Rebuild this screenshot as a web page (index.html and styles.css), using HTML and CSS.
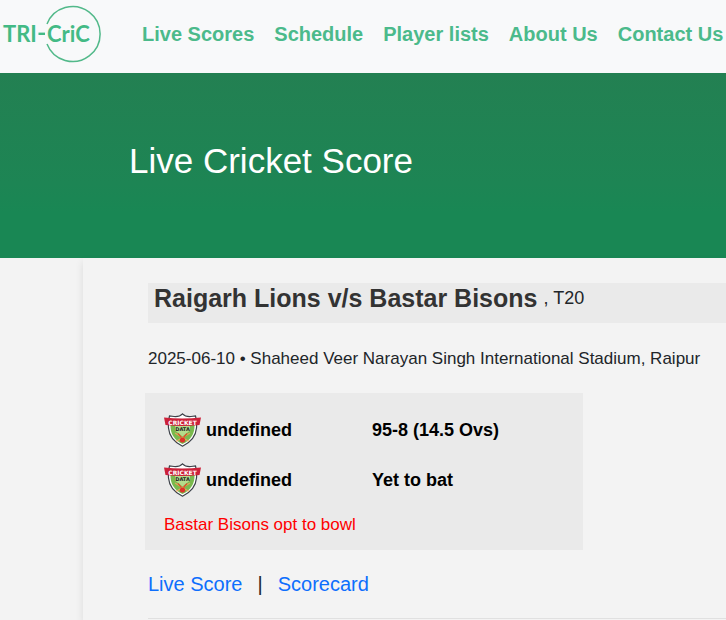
FILE: index.html
```html
<!DOCTYPE html>
<html lang="en">
<head>
<meta charset="utf-8">
<meta name="viewport" content="width=device-width, initial-scale=1">
<title>Live Cricket Score</title>
<link rel="stylesheet" href="styles.css">
</head>
<body>
<header class="navbar">
  <a class="brand" href="#" aria-label="TRI-CriC home">
    <svg class="brand-logo" viewBox="0 0 102 58">
      <path d="M47 19A27.500 27.500 0 1 1 47 39" fill="none" stroke="#52b98a" stroke-width="1.500"/>
      <text x="3" y="37" class="brand-text">TRI</text>
      <path d="M38.500 28.800h6.500" stroke="#43ba85" stroke-width="2.400"/>
      <text x="47" y="37" class="brand-text">CriC</text>
    </svg>
  </a>
  <nav class="nav-links">
    <a href="#">Live Scores</a>
    <a href="#">Schedule</a>
    <a href="#">Player lists</a>
    <a href="#">About Us</a>
    <a href="#">Contact Us</a>
  </nav>
</header>

<section class="hero">
  <h1>Live Cricket Score</h1>
</section>

<main class="match">
  <div class="match-title"><h2>Raigarh Lions v/s Bastar Bisons</h2><span>, T20</span></div>
  <p class="venue">2025-06-10 • Shaheed Veer Narayan Singh International Stadium, Raipur</p>
  <section class="scores">
    <div class="team">
      <div class="team-name">
        <svg class="crest" viewBox="0 0 37 34">
          <g id="crest">
            <path d="M18.500 .8Q15.500 4 10 3.500L5.500 3Q4 8 4.500 15Q5.500 27 18.500 33.200Q31.500 27 32.500 15Q33 8 31.500 3L27 3.500Q21.500 4 18.500 .8Z" fill="#fff" stroke="#3b4048" stroke-width="1.200"/>
            <path d="M6.500 12H30.500Q31 25 18.500 31Q6 25 6.500 12Z" fill="#79b94e"/>
            <path d="M11 12.500h15v5l-7.500 6-7.500-6Z" fill="#b4dc8c"/>
            <path d="M11 20l14 8.500M26 20l-14 8.500" stroke="#e3a75a" stroke-width="1.300"/>
            <path d="M14 20.500l3.500 4M23 20.500l-3.500 4" stroke="#d9532f" stroke-width="1.200"/>
            <circle cx="18.500" cy="27" r="2.600" fill="#dc3329"/>
            <path d="M0 4.500Q18.500 6.500 37 4.500L35.500 12Q18.500 14 1.500 12Z" fill="#cc2139"/>
            <text x="18.500" y="11.500" text-anchor="middle" class="crest-name">CRICKET</text>
            <text x="18.500" y="17.500" text-anchor="middle" class="crest-data">DATA</text>
          </g>
        </svg>
        undefined
      </div>
      <div class="team-score">95-8 (14.5 Ovs)</div>
    </div>
    <div class="team">
      <div class="team-name">
        <svg class="crest" viewBox="0 0 37 34"><use href="#crest"/></svg>
        undefined
      </div>
      <div class="team-score">Yet to bat</div>
    </div>
    <p class="status">Bastar Bisons opt to bowl</p>
  </section>
  <div class="tabs"><a href="#">Live Score</a><span>|</span><a href="#">Scorecard</a></div>
</main>
</body>
</html>
```
FILE: styles.css
```css
* {
  box-sizing: border-box;
}

body {
  margin: 0;
  min-height: 100vh;
  display: flex;
  flex-direction: column;
  overflow-x: hidden;
  background: #f3f3f3;
  color: #212529;
  font-family: "Liberation Sans", Arial, sans-serif;
  font-size: 17px;
  line-height: 24px;
}

h1, h2, p {
  margin: 0;
}

a {
  text-decoration: none;
}

.navbar {
  display: flex;
  align-items: center;
  gap: 40px;
  padding: 5px 0 10px;
  background: #f8f9fa;
}

.brand {
  flex: none;
}

.brand-logo {
  display: block;
  width: 102px;
  height: 58px;
}

.brand-text {
  font-family: Lato, sans-serif;
  font-size: 22px;
  font-weight: 700;
  fill: #43ba85;
}

.nav-links {
  display: flex;
  gap: 20px;
  white-space: nowrap;
  font-size: 20px;
  font-weight: 700;
}

.nav-links a {
  color: #4bba8b;
}

.hero {
  padding: 64px 129px 73px;
  background: linear-gradient(#238052, #1d8554 60%, #198754 75%);
  color: #fff;
}

.hero h1 {
  font-size: 35px;
  font-weight: 400;
  line-height: 48px;
}

.match {
  flex: 1;
  margin-left: 83px;
  padding: 25px 0 0 65px;
  box-shadow: 0 4px 8px rgba(0, 0, 0, 0.1);
}

.match-title {
  display: flex;
  align-items: center;
  gap: 6px;
  padding-left: 6px;
  padding-bottom: 10px;
  background: #eaeaea;
  font-size: 18px;
  white-space: nowrap;
}

.match-title h2 {
  color: #333;
  font-size: 25px;
  line-height: 30px;
}

.match-title span {
  line-height: 30px;
}

.venue {
  margin-top: 24px;
  white-space: nowrap;
}

.scores {
  display: grid;
  gap: 14px;
  max-width: 438px;
  margin: 22px 0 0 -3px;
  padding: 19px 19px 12px;
  background: #eaeaea;
}

.team {
  display: grid;
  grid-template-columns: 208px 1fr;
  align-items: center;
  height: 36px;
  color: #000;
  font-size: 18px;
  font-weight: 700;
}

.team-name {
  display: flex;
  align-items: center;
  gap: 5px;
}

.crest {
  width: 37px;
  height: 34px;
}

.crest-name {
  font: 700 6px "DejaVu Sans", sans-serif;
  fill: #fff;
}

.crest-data {
  font: 700 5px "DejaVu Sans", sans-serif;
  fill: #222;
}

.status {
  color: #f00;
  line-height: 26px;
}

.tabs {
  display: flex;
  gap: 15px;
  padding: 22px 0;
  border-bottom: 1px solid #e0e0e0;
  font-size: 20px;
}

.tabs a {
  color: #0d6efd;
}
```
